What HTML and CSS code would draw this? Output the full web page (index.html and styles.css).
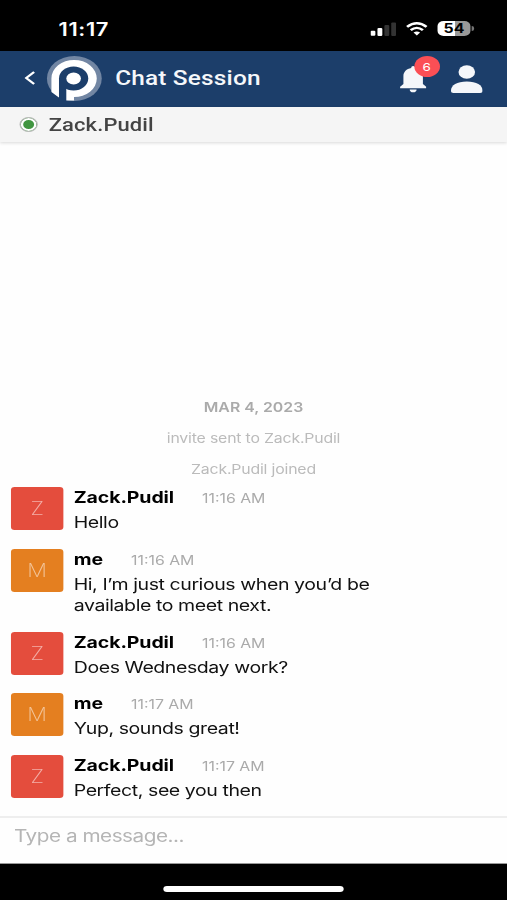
FILE: index.html
```html
<!DOCTYPE html>
<html lang="en">
<head>
  <meta charset="UTF-8">
  <title>Chat Session</title>
  <link rel="stylesheet" href="styles.css">
</head>
<body>

  <div class="phone">

    <div class="status-bar">
      <span class="clock">11:17</span>
      <div class="status-icons">
        <svg class="signal" viewBox="0 0 21 14">
          <rect x="0" y="8.8" width="4" height="5" rx="1" fill="#fff"/>
          <rect x="5.7" y="6" width="4" height="8" rx="1" fill="#fff"/>
          <rect x="11.4" y="3" width="4" height="11" rx="1" fill="#333"/>
          <rect x="17" y="0.5" width="4" height="13.5" rx="1" fill="#333"/>
        </svg>
        <svg class="wifi" viewBox="0 0 18 14">
          <path d="M1 4.8 Q9 -2.2 17 4.8" fill="none" stroke="#fff" stroke-width="2.4"/>
          <path d="M4 8.2 Q9 3.6 14 8.2" fill="none" stroke="#fff" stroke-width="2.3"/>
          <path d="M6.3 10.6 Q9 8.4 11.7 10.6 L9 13.5 Z" fill="#fff"/>
        </svg>
        <div class="battery"><span>54</span></div>
      </div>
    </div>

    <header class="header">
      <svg class="back" viewBox="0 0 9 14">
        <path d="M8 1 L1.5 7 L8 13" fill="none" stroke="#fff" stroke-width="2"/>
      </svg>
      <svg class="logo" viewBox="0 0 46 46">
        <circle cx="23" cy="22.5" r="22.5" fill="#7286a3"/>
        <path d="M4.2 36 V22.5 A18.6 18.6 0 1 1 22.7 41.1 V44.5 H16.4 L10.4 41.5 Z" fill="#fff"/>
        <circle cx="22.4" cy="22.5" r="12" fill="#1c3e6a"/>
        <rect x="10.4" y="22" width="6" height="24" fill="#1c3e6a"/>
        <circle cx="22.4" cy="22.5" r="6" fill="#fff"/>
      </svg>
      <h1>Chat Session</h1>
      <div class="bell">
        <svg viewBox="0 0 22 27">
          <path d="M11 0 C12 0 12.6 .8 12.6 2 C16.5 2.7 19 6 19 10 V18 L21.7 20.8 V22.3 H.3 V20.8 L3 18 V10 C3 6 5.5 2.7 9.4 2 C9.4 .8 10 0 11 0 Z" fill="#f5f7fa"/>
          <path d="M8.2 23.4 H13.8 A2.8 2.8 0 0 1 8.2 23.4 Z" fill="#f5f7fa"/>
        </svg>
        <span class="badge">6</span>
      </div>
      <svg class="user" viewBox="0 0 26 28">
        <circle cx="13" cy="7" r="6.8" fill="#f5f7fa"/>
        <path d="M0 26 C0 20 5 16.5 13 16.5 S26 20 26 26 Q26 28 24 28 H2 Q0 28 0 26 Z" fill="#f5f7fa"/>
      </svg>
    </header>

    <div class="contact">
      <span class="online"></span>
      <span>Zack.Pudil</span>
    </div>

    <main class="messages">
      <p class="date">MAR 4, 2023</p>
      <p class="event invite">invite sent to Zack.Pudil</p>
      <p class="event">Zack.Pudil joined</p>

      <div class="message">
        <div class="avatar">Z</div>
        <div class="body">
          <div class="meta"><b>Zack.Pudil</b><time>11:16 AM</time></div>
          <p>Hello</p>
        </div>
      </div>
      <div class="message">
        <div class="avatar me">M</div>
        <div class="body">
          <div class="meta"><b>me</b><time>11:16 AM</time></div>
          <p>Hi, I’m just curious when you’d be available to meet next.</p>
        </div>
      </div>
      <div class="message">
        <div class="avatar">Z</div>
        <div class="body">
          <div class="meta"><b>Zack.Pudil</b><time>11:16 AM</time></div>
          <p>Does Wednesday work?</p>
        </div>
      </div>
      <div class="message">
        <div class="avatar me">M</div>
        <div class="body">
          <div class="meta"><b>me</b><time>11:17 AM</time></div>
          <p>Yup, sounds great!</p>
        </div>
      </div>
      <div class="message">
        <div class="avatar">Z</div>
        <div class="body">
          <div class="meta"><b>Zack.Pudil</b><time>11:17 AM</time></div>
          <p>Perfect, see you then</p>
        </div>
      </div>
    </main>

    <div class="composer">
      <input type="text" placeholder="Type a message...">
    </div>

    <div class="home-bar"><span></span></div>

  </div>

</body>
</html>
```

FILE: styles.css
```css
* {
  box-sizing: border-box;
}

body {
  margin: 0;
  overflow: hidden;
  font-family: Inter, "Liberation Sans", sans-serif;
}

h1, p {
  margin: 0;
}

.phone {
  width: 416px;
  height: 900px;
  display: flex;
  flex-direction: column;
  background: #fefefe;
  transform: scaleX(1.21875);
  transform-origin: 0 0;
}

.status-bar {
  height: 51px;
  padding: 6px 27px 0 48px;
  display: flex;
  align-items: center;
  justify-content: space-between;
  background: #000;
  color: #fff;
}

.clock {
  padding-top: 1px;
  font-size: 18px;
  font-weight: 600;
  letter-spacing: 0.5px;
}

.status-icons {
  display: flex;
  align-items: center;
  gap: 8px;
}

.signal {
  width: 21px;
  height: 14px;
}

.wifi {
  width: 18px;
  height: 14px;
}

.battery {
  position: relative;
  width: 27px;
  height: 15px;
  margin-right: 3px;
  border-radius: 5px;
  background: linear-gradient(to right, #fff 54%, #999 54%);
  color: #000;
  font-size: 13px;
  font-weight: 700;
  line-height: 15px;
  text-align: center;
}

.battery::after {
  content: "";
  position: absolute;
  right: -3px;
  top: 5px;
  width: 2px;
  height: 5px;
  border-radius: 0 2px 2px 0;
  background: #777;
}

.header {
  height: 56px;
  padding: 0 20px;
  display: flex;
  align-items: center;
  background: #1c3e6a;
  color: #f5f7fa;
}

.back {
  width: 9px;
  height: 14px;
  margin-top: -2px;
}

.logo {
  width: 46px;
  height: 46px;
  margin-left: 9px;
}

.header h1 {
  flex: 1;
  margin: -2px 0 0 10.5px;
  font: 500 20px Roboto, sans-serif;
  letter-spacing: 0.15px;
}

.bell {
  position: relative;
  width: 22px;
  height: 27px;
}

.bell svg {
  display: block;
  width: 22px;
  height: 27px;
}

.badge {
  position: absolute;
  left: 11.5px;
  top: -10px;
  width: 21px;
  height: 21px;
  border-radius: 50%;
  background: #fb4f55;
  color: #fff;
  font-size: 11px;
  line-height: 22px;
  text-align: center;
}

.user {
  width: 26px;
  height: 28px;
  margin-left: 20px;
}

.contact {
  height: 35px;
  padding-left: 15.5px;
  display: flex;
  align-items: center;
  gap: 9.5px;
  background: #f5f5f5;
  box-shadow: 0 1px 3px rgba(0, 0, 0, 0.15);
  color: #444;
  font: 500 18px Roboto, sans-serif;
  letter-spacing: 0.1px;
}

.online {
  width: 15px;
  height: 15px;
  margin-top: -1px;
  border: 1px solid #bbb;
  border-radius: 50%;
  background: #419641;
  box-shadow: inset 0 0 0 2px #fff;
}

.messages {
  flex: 1;
  display: flex;
  flex-direction: column;
  justify-content: flex-end;
}

.date,
.event {
  text-align: center;
  font-size: 13px;
  line-height: 20px;
  color: #bbb;
}

.date {
  margin-bottom: 11px;
  font-weight: 600;
  color: #aaa;
}

.event {
  margin-bottom: 8.5px;
  letter-spacing: -0.15px;
}

.invite {
  margin-bottom: 11px;
}

.message {
  display: flex;
  gap: 8.5px;
  padding-left: 9px;
  margin-bottom: 15px;
}

.avatar {
  width: 43px;
  height: 43px;
  border-radius: 3px;
  background: #e44d3d;
  color: rgba(255, 255, 255, 0.55);
  font-size: 18px;
  font-weight: 200;
  line-height: 43px;
  text-align: center;
}

.avatar.me {
  background: #e47f20;
}

.body {
  width: 260px;
  color: #111;
  font-size: 16px;
  line-height: 21.5px;
  letter-spacing: -0.34px;
}

.meta {
  display: flex;
  align-items: baseline;
  gap: 23px;
  height: 25px;
  letter-spacing: -0.08px;
}

.meta b {
  color: #000;
  font-weight: 700;
}

.meta time {
  color: #aaa;
  font-size: 13px;
  letter-spacing: 0;
}

.composer {
  height: 48px;
  border-top: 2px solid #eee;
  border-bottom: 1px solid #999;
}

.composer input {
  width: 100%;
  height: 36px;
  padding: 0 0 0 11.5px;
  border: 0;
  outline: 0;
  background: none;
  font: 17px Inter, sans-serif;
  letter-spacing: -0.4px;
}

.composer input::placeholder {
  color: #b5b5b5;
}

.home-bar {
  height: 36px;
  padding-top: 22px;
  background: #000;
}

.home-bar span {
  display: block;
  width: 148px;
  height: 6px;
  margin: 0 auto;
  border-radius: 3px;
  background: #fff;
}
```
